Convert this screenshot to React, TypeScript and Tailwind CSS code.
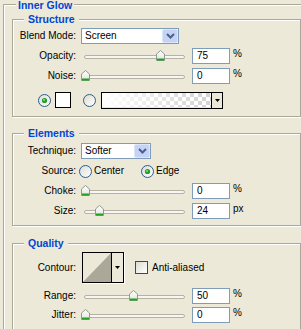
import { useId, type ReactNode } from "react";

const etched =
  "relative border border-[#ACA899] shadow-[inset_1px_1px_0_#fff,1px_1px_0_#fff]";

function Group({
  title,
  className,
  children,
}: {
  title: string;
  className: string;
  children: ReactNode;
}) {
  return (
    <div className={`${etched} ${className}`}>
      <span className="absolute left-[11px] top-[-7px] bg-[#ECE9D8] px-[4px] text-[10.5px] font-bold leading-[12px] text-[#0046D5]">
        {title}
      </span>
      {children}
    </div>
  );
}

function Label({ children }: { children: ReactNode }) {
  return <span className="w-[63px] shrink-0 text-right">{children}</span>;
}

function Chevron() {
  return (
    <svg width="9" height="6" viewBox="0 0 9 6">
      <path d="M1 1 L4.5 4.5 L8 1" fill="none" stroke="#4D6185" strokeWidth="2" />
    </svg>
  );
}

function Select({ value, width }: { value: string; width: string }) {
  return (
    <div
      className={`ml-[5px] flex h-[16px] items-center border border-[#7F9DB9] bg-white ${width}`}
    >
      <span className="flex-1 pl-[3px]">{value}</span>
      <span className="flex h-[14px] w-[16px] items-center justify-center rounded-[2px] border border-[#DCE6FB] bg-[#C4D3F6]">
        <Chevron />
      </span>
    </div>
  );
}

function Thumb() {
  const id = useId();
  return (
    <svg width="9" height="11" viewBox="0 0 9 11">
      <defs>
        <linearGradient id={id} x1="0" y1="0" x2="0" y2="1">
          <stop offset="0" stopColor="#FFFFFF" />
          <stop offset="1" stopColor="#E4E3DB" />
        </linearGradient>
      </defs>
      <path
        d="M0.5 4 L4.5 0.5 L8.5 4 L8.5 10.5 L0.5 10.5 Z"
        fill={`url(#${id})`}
        stroke="#8E9A91"
      />
      <rect x="1" y="8.5" width="7" height="2" fill="#21A121" />
    </svg>
  );
}

// track starts at x=84 in the page; pos is the thumb centre in page pixels
function Slider({ pos }: { pos: number }) {
  return (
    <div className="relative ml-[8px] h-[16px] w-[101px] shrink-0">
      <div className="absolute left-0 right-0 top-[7px] h-[4px] rounded-full border border-[#B5B2A4] bg-[#F7F6F2]" />
      <div className="absolute top-[2px]" style={{ left: pos - 84 - 4 }}>
        <Thumb />
      </div>
    </div>
  );
}

function SliderRow({
  label,
  pos,
  value,
  unit = "%",
  className = "",
}: {
  label: string;
  pos: number;
  value: string;
  unit?: string;
  className?: string;
}) {
  return (
    <div className={`flex h-[16px] items-center ${className}`}>
      <Label>{label}</Label>
      <Slider pos={pos} />
      <span className="ml-[7px] flex h-[16px] w-[38px] shrink-0 items-center border border-[#7F9DB9] bg-white pl-[4px]">
        {value}
      </span>
      <span className="mb-[5px] ml-[3px]">{unit}</span>
    </div>
  );
}

function Radio({ on, className = "" }: { on?: boolean; className?: string }) {
  const id = useId();
  return (
    <svg width="13" height="13" viewBox="0 0 13 13" className={`shrink-0 ${className}`}>
      <defs>
        <linearGradient id={id} x1="0" y1="0" x2="1" y2="1">
          <stop offset="0" stopColor="#DCDCD4" />
          <stop offset="1" stopColor="#FFFFFF" />
        </linearGradient>
      </defs>
      <circle cx="6.5" cy="6.5" r="6" fill={`url(#${id})`} stroke="#2F5B8C" />
      {on && (
        <>
          <circle cx="6.5" cy="6.5" r="2.6" fill="#21A121" />
          <circle cx="6" cy="6" r="1" fill="#8BE08B" />
        </>
      )}
    </svg>
  );
}

function DropArrow() {
  return (
    <svg width="5" height="3" viewBox="0 0 5 3">
      <path d="M0 0 H5 L2.5 3 Z" fill="#000" />
    </svg>
  );
}

function GradientPreview() {
  const id = useId();
  return (
    <svg width="109" height="14" viewBox="0 0 109 14" className="block">
      <defs>
        <pattern id={`${id}c`} width="8" height="8" patternUnits="userSpaceOnUse">
          <rect width="8" height="8" fill="#FFFFFF" />
          <rect width="4" height="4" fill="#D2D2D2" />
          <rect x="4" y="4" width="4" height="4" fill="#D2D2D2" />
        </pattern>
        <linearGradient id={`${id}g`} x1="0" y1="0" x2="1" y2="0">
          <stop offset="0" stopColor="#FFFFFF" stopOpacity="1" />
          <stop offset="1" stopColor="#FFFFFF" stopOpacity="0" />
        </linearGradient>
      </defs>
      <rect width="109" height="14" fill={`url(#${id}c)`} />
      <rect width="109" height="14" fill={`url(#${id}g)`} />
    </svg>
  );
}

function ContourPreview() {
  return (
    <svg width="28" height="29" viewBox="0 0 28 29" className="block">
      <path d="M0 29 L28 0 L28 29 Z" fill="#ACA899" />
    </svg>
  );
}

export default function App() {
  return (
    <div className="h-[329px] w-[301px] overflow-hidden bg-[#ECE9D8] font-['Liberation_Sans',Arial,sans-serif] text-[10px] leading-[12px] text-black">
      <div className="relative ml-[3px] mt-[4px] h-[340px] w-[320px] border border-[#ACA899] shadow-[inset_1px_1px_0_#fff]">
        <span className="absolute left-[12px] top-[-6px] bg-[#ECE9D8] px-[2px] text-[10.5px] font-bold leading-[12px] text-[#0046D5]">
          Inner Glow
        </span>

        <Group title="Structure" className="ml-[8px] mt-[14px] h-[98px] w-[289px] pt-[8px]">
          <div className="flex h-[16px] items-center">
            <Label>Blend Mode:</Label>
            <Select value="Screen" width="w-[98px]" />
          </div>
          <SliderRow label="Opacity:" pos={160} value="75" className="mt-[4px]" />
          <SliderRow label="Noise:" pos={85} value="0" className="mt-[4px]" />
          <div className="mt-[8px] flex h-[16px] items-center">
            <Radio on className="ml-[25px]" />
            <span className="ml-[4px] h-[16px] w-[16px] border border-black bg-white" />
            <Radio className="ml-[12px]" />
            <div className="ml-[5px] flex h-[17px] w-[122px] border border-black">
              <GradientPreview />
              <span className="flex w-[11px] items-center justify-center border-l border-black bg-[#ECE9D8]">
                <DropArrow />
              </span>
            </div>
          </div>
        </Group>

        <Group title="Elements" className="ml-[8px] mt-[16px] h-[93px] w-[289px] pt-[9px]">
          <div className="flex h-[16px] items-center">
            <Label>Technique:</Label>
            <Select value="Softer" width="w-[70px]" />
          </div>
          <div className="mt-[4px] flex h-[16px] items-center">
            <Label>Source:</Label>
            <Radio className="ml-[3px]" />
            <span className="ml-[2px]">Center</span>
            <Radio on className="ml-[17px]" />
            <span className="ml-[2px]">Edge</span>
          </div>
          <SliderRow label="Choke:" pos={85} value="0" className="mt-[4px]" />
          <SliderRow label="Size:" pos={99} value="24" unit="px" className="mt-[4px]" />
        </Group>

        <Group title="Quality" className="ml-[8px] mt-[17px] h-[120px] w-[289px] pt-[8px]">
          <div className="flex h-[31px] items-center">
            <Label>Contour:</Label>
            <div className="ml-[6px] flex h-[31px] w-[42px] border border-black shadow-[1px_1px_0_#fff]">
              <ContourPreview />
              <span className="flex flex-1 items-center justify-center border-l border-black">
                <DropArrow />
              </span>
            </div>
            <span className="ml-[11px] h-[13px] w-[13px] border border-[#1C5180] bg-[linear-gradient(135deg,#DCDCD4,#FFFFFF)]" />
            <span className="ml-[4px]">Anti-aliased</span>
          </div>
          <SliderRow label="Range:" pos={133} value="50" className="mt-[5px]" />
          <SliderRow label="Jitter:" pos={85} value="0" className="mt-[3px]" />
        </Group>
      </div>
    </div>
  );
}
